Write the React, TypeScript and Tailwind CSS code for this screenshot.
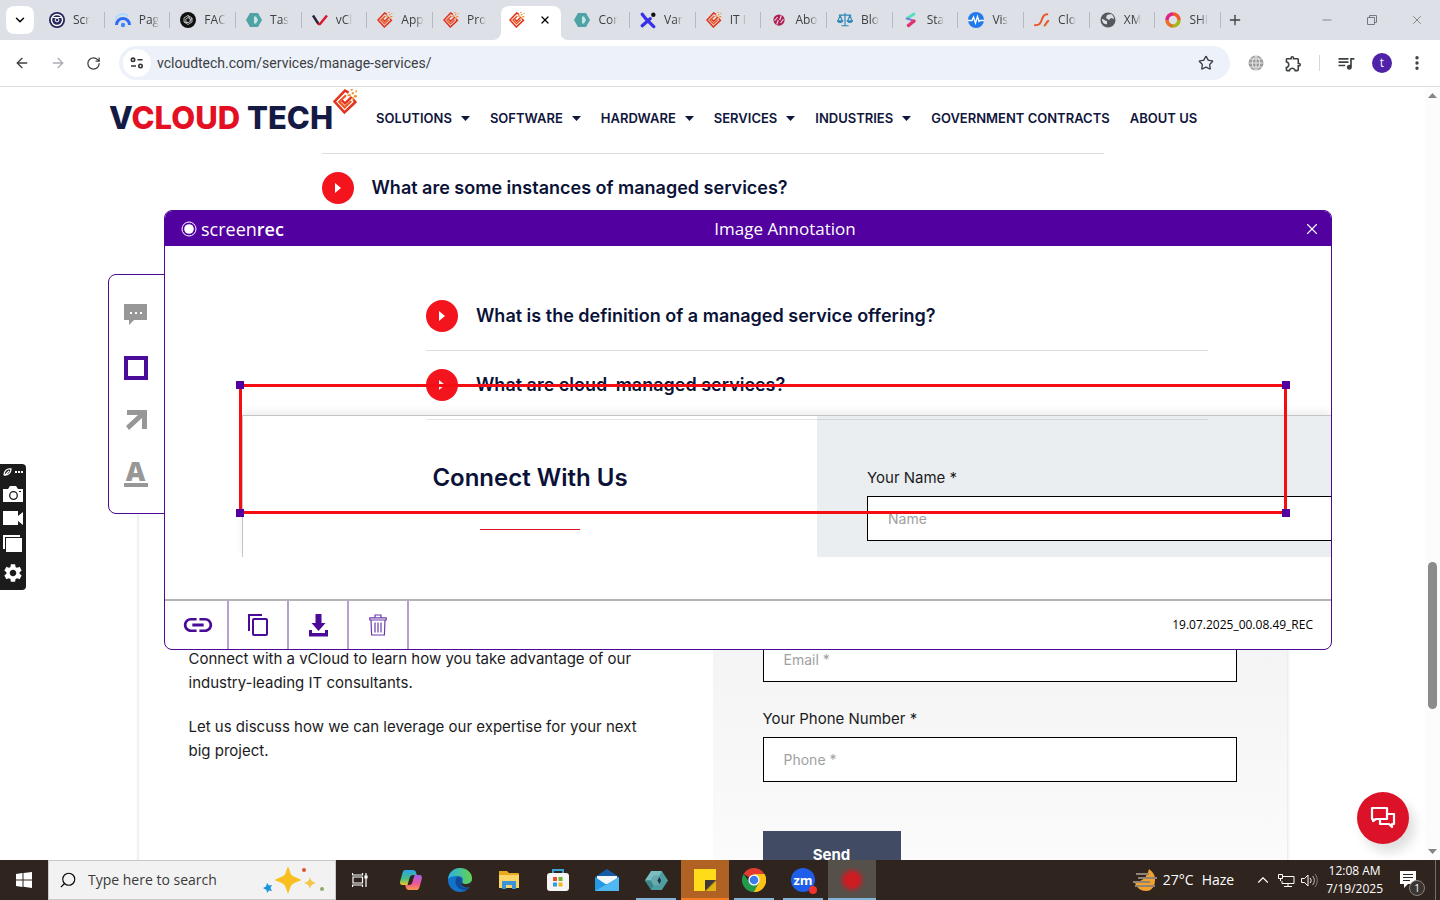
import type { ReactNode } from "react";
import {
  ArrowLeft,
  ArrowRight,
  ChevronDown,
  ChevronUp,
  Minus,
  MoreVertical,
  Plus,
  RotateCw,
  Search,
  Star,
  X,
} from "lucide-react";
import {
  MdLink,
  MdOutlineExtension,
  MdOutlineQueueMusic,
  MdSettings,
} from "react-icons/md";

/* ---------- Site favicons ---------- */

function BrandMark({ size = 16 }: { size?: number }) {
  return (
    <svg width={size} height={size} viewBox="0 0 24 24" fill="none" className="shrink-0" aria-hidden="true">
      <path d="M15 3.5 11.500 1.500 1.500 12 11 22.500 21.500 12.500 19.500 10" stroke="#e2331f" strokeWidth="2.400" />
      <path d="M12.500 6 6 12.200 11.200 17.600 17.500 11.500" stroke="#ee5a24" strokeWidth="2.200" />
      <path d="m8.500 11 3 2.800L18 7.500" stroke="#e2331f" strokeWidth="2.200" />
      <path d="M14 5h3v2h-3zM18 3h2v2h-2zM20 6h3v2h-3zM17 0h2v1.500h-2zM21.500 1.500H23V3h-1.500zM18 8h2v2h-2z" fill="#f08a24" />
    </svg>
  );
}

function HexMark({ size = 16 }: { size?: number }) {
  return (
    <svg width={size} height={size} viewBox="0 0 24 24" aria-hidden="true">
      <path d="M6.500 2h11L24 12l-6.500 10h-11L0 12z" fill="#4d9ea3" />
      <path d="M6.500 2h11L15 7H9L6 12H0z" fill="#7cbdc0" />
      <path d="M0 12h6l3 5-2.500 5z" fill="#3b868c" />
      <path d="M9 7h6l3 5-3 5H9l-3-5z" fill="#6aa9ad" />
      <path d="m15 8 2 4-2 4-2-4z" fill="#173a42" />
    </svg>
  );
}

const favicons: Record<string, ReactNode> = {
  ring: (
    <svg width="16" height="16" viewBox="0 0 16 16" fill="none">
      <circle cx="8" cy="8" r="8" fill="#25265a" />
      <circle cx="8" cy="8" r="5.500" stroke="#fff" strokeWidth="1.400" />
      <path d="M4 5.500h8" stroke="#fff" />
      <circle cx="8" cy="8" r="1.900" stroke="#fff" />
    </svg>
  ),
  gauge: (
    <svg width="16" height="16" viewBox="0 0 16 16" fill="none">
      <path d="M1.500 13a6.500 6.500 0 0 1 13 0" stroke="#2f6df6" strokeWidth="3" />
      <path d="M0 8a8 8 0 0 1 13-4" stroke="#a9dcff" strokeWidth="2" />
      <circle cx="8" cy="13" r="2.200" fill="#3d8bfa" />
    </svg>
  ),
  spiral: (
    <svg width="16" height="16" viewBox="0 0 16 16" fill="none">
      <circle cx="8" cy="8" r="8" fill="#111" />
      <path d="M8 3.500 12 6v4l-4 2.500L4 10V6zM8 5.500 10.200 7v2.500L8 10.700 5.800 9.500V7zM8 3.500l2.200 3.500M4 10l4 .7M12 6 10.200 9.500" stroke="#ddd" strokeWidth=".8" />
    </svg>
  ),
  hex: (
    <svg width="16" height="16" viewBox="0 0 16 16">
      <path d="M4 1h8l4 7-4 7H4L0 8z" fill="#4fa3a5" />
      <path d="M8 4.500h2L12 8l-2 3.500H8z" fill="#c4e8e7" />
    </svg>
  ),
  vee: (
    <svg width="16" height="16" viewBox="0 0 16 16" fill="none">
      <path d="m1 3.500 5.500 8.500" stroke="#2a2038" strokeWidth="2.400" />
      <path d="M6 12h2L15 3.500" stroke="#d9182b" strokeWidth="2.400" />
    </svg>
  ),
  brand: <BrandMark />,
  cross: (
    <svg width="18" height="18" viewBox="0 0 18 18" fill="none">
      <path d="m2.500 2.500 4 5 5 5 4 4M2.500 15.500l4.500-4 4.500-4" stroke="#3730e8" strokeWidth="3.600" strokeLinecap="round" />
      <circle cx="15" cy="3" r="2.500" fill="#111" />
    </svg>
  ),
  ball: (
    <svg width="12" height="12" viewBox="0 0 16 16">
      <circle cx="8" cy="8" r="7.500" fill="#ad1f55" />
      <path d="m2 9 4-5M5 14 7 8M9 8l2-6M10 12l4-5" stroke="#ead4dd" strokeWidth="1.600" />
    </svg>
  ),
  scales: (
    <svg width="18" height="16" viewBox="0 0 18 16" fill="none" stroke="#2f86b7" strokeWidth="1.300">
      <path d="M9 0v14M2 2.500h14M5 14.500h8M3.500 3 1 9M3.500 3 6 9M14.500 3 12 9M14.500 3 17 9" />
      <path d="M.5 9h6c-1 2.300-5 2.300-6 0zM11.500 9h6c-1 2.300-5 2.300-6 0z" fill="#2f86b7" />
    </svg>
  ),
  stripe: (
    <svg width="14" height="16" viewBox="0 0 14 16" fill="none" strokeLinecap="round">
      <path d="M3 6.500 10 2" stroke="#54dfc4" strokeWidth="3" />
      <path d="m3 6.500 6 2" stroke="#8b76d8" strokeWidth="2" />
      <path d="M4.500 13.500 10 9" stroke="#e2336d" strokeWidth="3.500" />
    </svg>
  ),
  pulse: (
    <svg width="16" height="16" viewBox="0 0 16 16" fill="none">
      <circle cx="8" cy="8" r="8" fill="#2279ee" />
      <path d="M0 8.500h4L5.500 5l2 6 2-6.500 1.500 5 1-1H16" stroke="#fff" strokeWidth="1.300" />
    </svg>
  ),
  swoosh: (
    <svg width="18" height="16" viewBox="0 0 18 16" fill="none" strokeLinecap="round">
      <path d="M1 14c6-.5 6-2 8-7s3-5 6-5.500" stroke="#e8592c" strokeWidth="2.300" />
      <path d="M12 14c1.500-1 1.500-3 4-5" stroke="#e8592c" strokeWidth="2.300" />
    </svg>
  ),
  globe: (
    <svg width="16" height="16" viewBox="0 0 16 16">
      <circle cx="8" cy="8" r="7.500" fill="#55595e" />
      <path d="M2 7c2 0 3 2 5 2v3c-3 1-5-2-5-5zM7 3l4-1c2 1 3 3 3 5l-3-1-2 2-3-2z" fill="#dde1e6" />
    </svg>
  ),
  wheel: (
    <svg width="16" height="16" viewBox="0 0 16 16" fill="none" strokeWidth="3.600">
      <path d="M8 2a6 6 0 0 0-6 6" stroke="#e0218a" />
      <path d="M2 8a6 6 0 0 0 6 6" stroke="#e8702a" />
      <path d="M8 14a6 6 0 0 0 6-6" stroke="#a6b81e" />
      <path d="M14 8a6 6 0 0 0-6-6" stroke="#f0572c" />
    </svg>
  ),
};

const tabs = [
  { icon: "ring", title: "Scr" },
  { icon: "gauge", title: "Pag" },
  { icon: "spiral", title: "FAC" },
  { icon: "hex", title: "Tas" },
  { icon: "vee", title: "vCl" },
  { icon: "brand", title: "App" },
  { icon: "brand", title: "Pro" },
  { icon: "brand", title: "", active: true },
  { icon: "hex", title: "Cor" },
  { icon: "cross", title: "Var" },
  { icon: "brand", title: "IT I" },
  { icon: "ball", title: "Abo" },
  { icon: "scales", title: "Blo" },
  { icon: "stripe", title: "Sta" },
  { icon: "pulse", title: "Vis" },
  { icon: "swoosh", title: "Clo" },
  { icon: "globe", title: "XM" },
  { icon: "wheel", title: "SHI" },
];

function TabStrip() {
  return (
    <div className="flex h-10 shrink-0 items-center bg-[#dde1e7] pl-1.5 text-[#3c4043]">
      <button aria-label="Search tabs" className="flex size-7 items-center justify-center rounded-lg bg-white text-black">
        <ChevronDown size={14} strokeWidth={2.5} />
      </button>
      <div className="ml-[5px] flex h-full max-w-[1182px] flex-1 items-center">
        {tabs.map((tab, i) =>
          tab.active ? (
            <div key={i} className="relative flex h-full min-w-0 flex-1 items-end pl-2.5">
              <div className="-ml-2 flex h-[34px] w-[60px] shrink-0 items-center justify-between rounded-t-lg bg-white pr-2.5 pb-1.5 pl-2">
                {favicons[tab.icon]}
                <button aria-label="Close tab" className="text-black">
                  <X size={12} strokeWidth={2.5} />
                </button>
              </div>
              <svg className="absolute bottom-0 -left-1.5" width="8" height="8"><path d="M8 0v8H0a8 8 0 0 0 8-8" fill="#fff" /></svg>
              <svg className="absolute -right-1 bottom-0" width="8" height="8"><path d="M0 0v8h8a8 8 0 0 1-8-8" fill="#fff" /></svg>
            </div>
          ) : (
            <div key={i} className="flex min-w-0 flex-1 items-center pl-2.5">
              <span className="flex w-4 shrink-0 justify-center">{favicons[tab.icon]}</span>
              <span className="ml-2 mask-r-from-60% text-xs whitespace-nowrap">{tab.title}</span>
              {tabs[i + 1]?.active ? null : <span className="ml-auto h-4 w-px bg-[#b4b8bf]" />}
            </div>
          ),
        )}
      </div>
      <button aria-label="New tab" className="ml-1.5"><Plus size={16} /></button>
      <div className="ml-auto flex items-center gap-8 pr-4 text-[#777b80]">
        <button aria-label="Minimize"><Minus size={14} strokeWidth={1.5} /></button>
        <button aria-label="Restore">
          <svg width="12" height="12" viewBox="0 0 12 12" fill="none" stroke="currentColor"><path d="M1.500 3.500h7v7h-7zM3.500 3.500v-2h7v7h-2" /></svg>
        </button>
        <button aria-label="Close"><X size={14} strokeWidth={1.5} /></button>
      </div>
    </div>
  );
}

function AddressBar() {
  return (
    <div className="flex h-[47px] shrink-0 items-center border-b border-[#dcdee1] bg-white px-3.5 text-[#3c4043]">
      <button aria-label="Back"><ArrowLeft size={16} /></button>
      <button aria-label="Forward" className="ml-5 text-[#a9adb2]"><ArrowRight size={16} /></button>
      <button aria-label="Reload" className="ml-5"><RotateCw size={15} /></button>
      <div className="ml-[18px] flex h-[34px] flex-1 items-center rounded-full bg-[#edf1f9] pr-4 pl-1">
        <button aria-label="Site information" className="flex size-7 items-center justify-center rounded-full bg-white">
          <svg width="14" height="12" viewBox="0 0 14 12" fill="none" stroke="#333" strokeWidth="1.600">
            <circle cx="3" cy="2.800" r="1.700" /><path d="M7.500 2.800h5M1 9h5" /><circle cx="10.500" cy="9" r="1.700" />
          </svg>
        </button>
        <input
          aria-label="Address"
          defaultValue="vcloudtech.com/services/manage-services/"
          className="ml-1.5 min-w-0 flex-1 bg-transparent font-[Roboto,sans-serif] text-sm outline-none"
        />
        <button aria-label="Bookmark"><Star size={16} /></button>
      </div>
      <button aria-label="Web extension" className="ml-[18px]">
        <svg width="16" height="16" viewBox="0 0 16 16" fill="none">
          <circle cx="8" cy="8" r="7.500" fill="#9b9b9b" />
          <path d="M.5 8h15M8 .5v15M2 4h12M2 12h12M8 .5c-5 4-5 11 0 15M8 .5c5 4 5 11 0 15" stroke="#eee" strokeWidth=".9" />
        </svg>
      </button>
      <button aria-label="Extensions" className="ml-5"><MdOutlineExtension size={19} /></button>
      <span className="ml-4 h-4 w-px bg-[#d3d6da]" />
      <button aria-label="Media" className="ml-4"><MdOutlineQueueMusic size={20} /></button>
      <button aria-label="Profile" className="ml-4 size-5 rounded-full bg-[#4f22a8] text-xs leading-5 text-white">t</button>
      <button aria-label="Menu" className="ml-4"><MoreVertical size={18} strokeWidth={2.5} /></button>
    </div>
  );
}

/* ---------- vCloud Tech page ---------- */

const navItems = [
  { label: "SOLUTIONS", menu: true },
  { label: "SOFTWARE", menu: true },
  { label: "HARDWARE", menu: true },
  { label: "SERVICES", menu: true },
  { label: "INDUSTRIES", menu: true },
  { label: "GOVERNMENT CONTRACTS" },
  { label: "ABOUT US" },
];

function SiteHeader() {
  return (
    <header className="flex h-[66px] shrink-0 items-start pl-[109px] whitespace-nowrap">
      <a href="#home" className="flex w-[267px] shrink-0 items-start pt-0.5 font-[Inter,sans-serif] text-[31px] leading-8 font-extrabold">
        <span className="mt-[13px] text-[#151a45]">V<span className="text-[#e40f22]">CLOUD</span> TECH</span>
        <BrandMark size={25} />
      </a>
      <nav className="mt-[21px] flex gap-5 font-[Inter,sans-serif] text-[13px] leading-5 font-semibold text-[#10163c]">
        {navItems.map((item) => (
          <a key={item.label} href="#nav" className="flex items-center gap-[9px]">
            {item.label}
            {item.menu && <svg width="9" height="5"><path d="M0 0h9L4.500 5z" fill="#10163c" /></svg>}
          </a>
        ))}
      </nav>
    </header>
  );
}

function Question({ children }: { children: ReactNode }) {
  return (
    <button className="flex h-[68px] w-full items-center gap-[18px] font-[Inter,sans-serif] text-lg font-semibold whitespace-nowrap text-[#0b1238]">
      <span className="flex size-8 items-center justify-center rounded-full bg-[#f3141e]">
        <svg width="8" height="10"><path d="M1 0v10l6-5z" fill="#fff" /></svg>
      </span>
      {children}
    </button>
  );
}

const fieldClass =
  "block h-[45px] w-full border border-black bg-white px-5 text-sm text-black outline-none placeholder:text-[#a1a1a1]";

function SitePage() {
  return (
    <main className="flex min-h-0 flex-1 bg-white">
      <div className="flex min-w-0 flex-1 flex-col overflow-hidden">
        <SiteHeader />
        <section className="mx-auto w-full max-w-[782px] border-t border-[#dcdcdc]">
          <Question>What are some instances of managed services?</Question>
        </section>
        <section className="mx-auto mt-[234px] grid w-full max-w-[1150px] shrink-0 grid-cols-2 border border-[#ededed] font-[Inter,sans-serif] text-[15px] leading-6 text-[#1b1b22] shadow-sm">
          <div className="flex flex-col gap-5 pt-[190px] pr-[70px] pl-[50px]">
            <p>Connect with a vCloud to learn how you take advantage of our industry-leading IT consultants.</p>
            <p>Let us discuss how we can leverage our expertise for your next big project.</p>
          </div>
          <form className="bg-linear-to-b from-[#eceff2] via-[#f5f5f6] to-[#fcfcfc] px-[50px] pt-[180px] pb-5">
            <input aria-label="Email" type="email" placeholder="Email *" className={fieldClass} />
            <label htmlFor="phone" className="mt-[25px] mb-1.5 block leading-6">Your Phone Number *</label>
            <input id="phone" type="tel" placeholder="Phone *" className={fieldClass} />
            <button type="button" className="mt-[49px] h-12 w-[138px] bg-[#414c64] font-bold text-white">Send</button>
          </form>
        </section>
      </div>
      <div className="flex w-[15px] shrink-0 flex-col items-center justify-between bg-[#fcfcfc] py-1.5">
        <svg width="9" height="5"><path d="M0 5h9L4.500 0z" fill="#858585" /></svg>
        <span className="mt-[324px] h-[147px] w-[9px] rounded-full bg-[#8b8b8b]" />
        <svg width="9" height="5"><path d="M0 0h9L4.500 5z" fill="#858585" /></svg>
      </div>
    </main>
  );
}

/* ---------- Screenrec ---------- */

function DrawingTools() {
  return (
    <div className="absolute top-[274px] left-[108px] flex w-[57px] flex-col items-center gap-[29px] rounded-l-lg border border-[#4c0a94] bg-white py-[26px] pr-0.5">
      <button aria-label="Comment">
        <svg width="24" height="26" viewBox="0 0 24 26">
          <path d="M0 3h23v16H10l-5 5v-5H0z" fill="#979797" />
          <path d="M6 11h2v2H6zM11 11h2v2h-2zM16 11h2v2h-2z" fill="#fff" />
        </svg>
      </button>
      <button aria-label="Rectangle" className="size-6 border-4 border-[#4a0b98]" />
      <button aria-label="Arrow">
        <svg width="24" height="22" viewBox="0 0 24 22"><path d="M3 1h20v19h-5V9L5 21l-3-4L14 6H3z" fill="#979797" /></svg>
      </button>
      <button aria-label="Text" className="flex w-6 flex-col items-center border-b-4 border-[#979797] pb-0.5 font-['Open_Sans',sans-serif] text-[27px] leading-[21px] font-extrabold text-[#979797]">
        A
      </button>
    </div>
  );
}

function Screenshot() {
  return (
    <div className="pt-9">
      <div className="relative z-10 ml-[261px] max-w-[782px]">
        <div className="border-b border-[#dcdcdc]"><Question>What is the definition of a managed service offering?</Question></div>
        <div className="border-b border-black/10"><Question>What are cloud-managed services?</Question></div>
      </div>
      <div className="-mt-[5px] ml-[77px] flex h-[142px] overflow-hidden border-t border-l border-[#c4c4c4] font-[Inter,sans-serif] text-[#0b1238] shadow-[0_-4px_8px_#0001]">
        <div className="flex w-[574px] shrink-0 flex-col items-center pt-[46px]">
          <h2 className="text-2xl leading-8 font-semibold">Connect With Us</h2>
          <span className="mt-[35px] h-px w-[100px] bg-[#d9142e]" />
        </div>
        <div className="flex-1 bg-[#ebeef1] pt-[50px] pl-[50px]">
          <label htmlFor="name" className="mb-1.5 block text-[15px] leading-6 text-[#1b1b22]">Your Name *</label>
          <input id="name" placeholder="Name" className={`${fieldClass} border-r-0`} />
        </div>
      </div>
    </div>
  );
}

function Handle({ className }: { className: string }) {
  return <span className={`absolute size-2 bg-[#5200a0] ${className}`} />;
}

const purple = "#4a0b98";

const actions = [
  { label: "Copy link", icon: <MdLink size={34} color={purple} /> },
  {
    label: "Copy",
    icon: (
      <svg width="20" height="22" viewBox="0 0 20 22" fill="none" stroke={purple} strokeWidth="2">
        <path d="M1 17V1h13" /><rect x="5" y="5" width="14" height="16" rx="1" />
      </svg>
    ),
  },
  {
    label: "Download",
    icon: (
      <svg width="19" height="23" viewBox="0 0 19 23" fill={purple}>
        <path d="M6.500 0h6v9h4l-7 8-7-8h4zM0 16h3v3h13v-3h3v6.500H0z" />
      </svg>
    ),
  },
  {
    label: "Delete",
    icon: (
      <svg width="18" height="22" viewBox="0 0 18 22" fill="none" stroke="#6c3bab" strokeWidth="1.200">
        <path d="M6 3.500V1h6v2.500M.8 6V3.800h16.400V6zM2 6l.6 15h12.800L16 6M6 8.500v10M9 8.500v10M12 8.500v10" />
      </svg>
    ),
  },
];

function AnnotationWindow() {
  return (
    <section className="absolute top-[210px] right-[108px] left-[164px] flex h-[440px] flex-col overflow-hidden rounded-lg border border-[#4c0a94] bg-white">
      <div className="flex h-[35px] shrink-0 items-center bg-[#5200a0] pr-2.5 pl-4 text-white">
        <div className="flex w-[110px] items-center gap-1 text-lg leading-6">
          <svg width="16" height="16" viewBox="0 0 16 16" fill="none"><circle cx="8" cy="8" r="7" stroke="#fff" /><circle cx="8" cy="8" r="4.800" fill="#fff" /></svg>
          <span>screen<b className="font-semibold">rec</b></span>
        </div>
        <h1 className="flex-1 pr-6 text-center text-[17px]">Image Annotation</h1>
        <button aria-label="Close window"><X size={18} strokeWidth={1.5} /></button>
      </div>
      <div className="min-h-0 flex-1"><Screenshot /></div>
      {/* Red selection box */}
      <div className="absolute top-[173px] right-[44px] left-[74px] z-20 h-[130px] border-3 border-[#f40d12]">
        <Handle className="-top-1.5 -left-1.5" />
        <Handle className="-top-1.5 -right-1.5" />
        <Handle className="-bottom-1.5 -left-1.5" />
        <Handle className="-right-1.5 -bottom-1.5" />
      </div>
      <div className="flex h-[50px] shrink-0 items-center border-t-2 border-[#b5b1b9] pl-1">
        {actions.map((action) => (
          <button key={action.label} aria-label={action.label} className="flex h-full w-[60px] items-center justify-center border-r-2 border-[#b5a0d0]">
            {action.icon}
          </button>
        ))}
        <span className="ml-auto pr-[18px] text-xs text-black">19.07.2025_00.08.49_REC</span>
      </div>
    </section>
  );
}

function CaptureDock() {
  return (
    <div className="absolute top-[464px] left-0 flex h-[126px] w-[26px] flex-col items-center justify-between rounded-r bg-[#1b1b1b] pt-1 pb-1.5 text-white">
      <svg width="20" height="8" viewBox="0 0 20 8" fill="none">
        <path d="M1 7c0-4 3-7 7-6 0 4-3 6-6 6l4-4" stroke="#fff" strokeWidth="1.300" />
        <path d="M12 3h2v2h-2zM15 3h2v2h-2zM18 3h2v2h-2z" fill="#fff" />
      </svg>
      <button aria-label="Take screenshot">
        <svg width="20" height="16" viewBox="0 0 20 16" fill="none">
          <path d="M0 3h5l2-3h6l2 3h5v13H0z" fill="#fff" /><circle cx="10.500" cy="9.500" r="3.800" stroke="#1b1b1b" strokeWidth="1.300" /><path d="M16 5.500h2" stroke="#1b1b1b" />
        </svg>
      </button>
      <button aria-label="Record video">
        <svg width="20" height="14" viewBox="0 0 20 14" fill="#fff"><path d="M0 0h15v5l5-4v13l-5-4v4H0z" /></svg>
      </button>
      <button aria-label="Gallery">
        <svg width="20" height="18" viewBox="0 0 20 18" fill="#fff"><path d="M0 0h17v2H2v12H0z" /><path d="M3 3h16v14H3z" /></svg>
      </button>
      <button aria-label="Settings"><MdSettings size={22} /></button>
    </div>
  );
}

/* ---------- Windows taskbar ---------- */

const apps = [
  {
    label: "Copilot",
    icon: (
      <svg width="24" height="24" viewBox="0 0 24 24">
        <defs>
          <linearGradient id="cop1" x1="0" y1="0" x2="0" y2="1"><stop stopColor="#2aa4ee" /><stop offset=".6" stopColor="#48c07a" /><stop offset="1" stopColor="#f3c62c" /></linearGradient>
          <linearGradient id="cop2" x1="0" y1="0" x2="0" y2="1"><stop stopColor="#a45cf0" /><stop offset=".6" stopColor="#f2578e" /><stop offset="1" stopColor="#f79a45" /></linearGradient>
        </defs>
        <path d="M6 2h8c3 0 3 3 4 5h-4c-2 0-3 1-3.500 3L8.500 17H4c-3 0-3.500-2-2.500-5L3.500 5C4 3 5 2 6 2z" fill="url(#cop1)" />
        <path d="M18 22h-8c-3 0-3-3-4-5h4c2 0 3-1 3.500-3l2-7H20c3 0 3.500 2 2.500 5l-2 7c-.5 2-1.500 3-2.500 3z" fill="url(#cop2)" />
      </svg>
    ),
  },
  {
    label: "Edge",
    icon: (
      <svg width="24" height="24" viewBox="0 0 24 24">
        <defs><linearGradient id="edge"><stop stopColor="#2bb1e6" /><stop offset="1" stopColor="#65d34b" /></linearGradient></defs>
        <circle cx="12" cy="12" r="12" fill="#1572c9" />
        <path d="M0 11C1 4 6 0 12 0c7 0 12 5 12 10 0 4-3 6-6 6-3 0-4-1-3.500-2.500C16 11 14 8 10 8 5 8 1 9 0 11z" fill="url(#edge)" />
        <path d="M9 9c-4 5 0 13 8 13 2 0 4-1 5-3-3 2-8 1-9-2-1-2 1-3 1-5 0-2-3-4-5-3z" fill="#0f4b9b" />
        <path d="M14.500 13.500c-1 2 1 3 4 2.500 2 0 4-1 5.200-3L24 16l-2 3c-3 1.500-7 0-8.500-2-1-1.500 0-2.500 1-3.500z" fill="#332821" />
      </svg>
    ),
  },
  {
    label: "File Explorer",
    icon: (
      <svg width="22" height="20" viewBox="0 0 22 20">
        <path d="M1 1h8l2 2h9a1 1 0 0 1 1 1v14H1z" fill="#e9a821" /><path d="M1 5h20v13H1z" fill="#fbd567" />
        <path d="M4 11h14v8h-4v-4H8v4H4z" fill="#3d93d8" />
      </svg>
    ),
  },
  {
    label: "Microsoft Store",
    icon: (
      <svg width="24" height="24" viewBox="0 0 24 24">
        <path d="M7 7V2h10v5" fill="none" stroke="#38a3d6" strokeWidth="2" /><rect x="1" y="5" width="22" height="18" rx="3" fill="#f5f5f5" />
        <path d="M7 9h4v4H7z" fill="#e64f2e" /><path d="M12.500 9h4v4h-4z" fill="#70b52c" /><path d="M7 14.500h4v4H7z" fill="#2b9fe0" /><path d="M12.500 14.500h4v4h-4z" fill="#f4b619" />
      </svg>
    ),
  },
  {
    label: "Mail",
    icon: (
      <svg width="24" height="22" viewBox="0 0 24 22">
        <path d="m0 8 12-8 12 8v14H0z" fill="#165ba8" /><path d="M2 7h20v8H2z" fill="#f4f8fb" />
        <path d="m0 8 12 8L24 8v14H0z" fill="#2598e3" /><path d="m24 8-24 14h24z" fill="#50b9f2" />
      </svg>
    ),
  },
  { label: "Monitor", icon: <HexMark size={23} />, line: "after:w-10 after:bg-[#82b4d8]" },
  {
    label: "Sticky Notes",
    icon: (
      <svg width="22" height="22" viewBox="0 0 22 22"><path d="M0 0h22v11L11 22H0z" fill="#ffdc19" /><path d="M11 11h11L11 22z" fill="#3f3a33" /><path d="M22 12v10H12z" fill="#e0b411" /></svg>
    ),
    line: "bg-[#b06224] after:w-full after:bg-[#f47b20]",
  },
  {
    label: "Chrome",
    icon: (
      <svg width="24" height="24" viewBox="0 0 24 24">
        <path d="M12 12 1.600 6a12 12 0 0 1 20.800 0z" fill="#e33b2e" /><path d="M12 12 22.400 6A12 12 0 0 1 12 24z" fill="#fbc116" />
        <path d="M1.600 6A12 12 0 0 0 12 24l5-9H8z" fill="#229a4a" /><path d="M12 6h10.400A12 12 0 0 1 12 24l5-9z" fill="#fbc116" />
        <circle cx="12" cy="12" r="5.600" fill="#fff" /><circle cx="12" cy="12" r="4.300" fill="#3b7ded" />
      </svg>
    ),
    line: "after:w-10 after:bg-[#82b4d8]",
  },
  {
    label: "Zoom",
    icon: (
      <span className="relative flex size-6 items-center justify-center rounded-full bg-[#1f5ee8] text-[13px] leading-none font-bold text-white">
        zm
        <i className="absolute -right-0.5 -bottom-0.5 size-2 rounded-full bg-[#f2322e]" />
      </span>
    ),
    line: "after:w-10 after:bg-[#82b4d8]",
  },
  {
    label: "Recorder",
    icon: <span className="size-5 rounded-full bg-[#cf1b22] blur-[2px]" />,
    line: "bg-[#56504a] after:w-full after:bg-[#82b4d8]",
  },
];

function Taskbar() {
  return (
    <footer className="relative flex h-10 shrink-0 items-center bg-[#30251e] text-white">
      <button aria-label="Start" className="flex h-full w-12 items-center justify-center">
        <svg width="16" height="16" viewBox="0 0 16 16" fill="#fff"><path d="m0 2 6.500-1v6.500H0zM7.500.9 16 0v7.500H7.500zM0 8.500h6.500V15L0 14zM7.500 8.500H16V16l-8.500-1.200z" /></svg>
      </button>
      <label className="flex h-full w-72 items-center border border-[#c9c9c9] bg-[#f2f2f2] pr-2 pl-2.5 text-black">
        <Search size={18} strokeWidth={1.5} className="-scale-x-100" />
        <input aria-label="Search" placeholder="Type here to search" className="ml-[11px] min-w-0 flex-1 text-sm outline-none placeholder:text-[#3a3a3a]" />
        <svg width="64" height="28" viewBox="0 0 64 28">
          <path d="M25 2c2 8 3 9 12 12-9 3-10 4-12 12-2-8-3-9-12-12 9-3 10-4 12-12z" fill="#f9bf1f" stroke="#f9bf1f" strokeWidth="1.500" strokeLinejoin="round" />
          <path d="M47 11c1 4 2 4.500 6 6-4 1.500-5 2-6 6-1-4-2-4.500-6-6 4-1.500 5-2 6-6z" fill="#f6c646" />
          <path d="m4 17 2 2.500 3-.5-1.500 3L9 25l-3-.5L4 27l-.5-3L0 22l3-1.500z" fill="#1e93dd" />
          <circle cx="41" cy="4" r="2" fill="#dc5430" /><circle cx="59" cy="23" r="2" fill="#91a868" />
        </svg>
      </label>
      <button aria-label="Task view" className="mr-[3px] flex h-full w-12 items-center justify-center">
        <svg width="16" height="16" viewBox="0 0 16 16" fill="none" stroke="#fff" strokeWidth="1.200"><path d="M.5 1v2h10V1M.5 15v-2h10v2M1 5h9.500v6H1zM14 1v14" /><path d="M13 4h2v2h-2z" fill="#fff" /></svg>
      </button>
      <div className="flex h-full gap-px">
        {apps.map((app) => (
          <button
            key={app.label}
            aria-label={app.label}
            className={`relative flex h-full w-12 items-center justify-center after:absolute after:bottom-0 after:h-0.5 ${app.line ?? ""}`}
          >
            {app.icon}
          </button>
        ))}
      </div>
      <div className="ml-auto flex h-full items-center whitespace-nowrap">
        <svg width="25" height="24" viewBox="0 0 25 24" fill="none">
          <path d="M17 1c-2 8-6 12-14 14 2 5 6 8 11 8 6 0 9-5 9-11 0-5-2-8-6-11z" fill="#f0a22c" />
          <path d="M4 6h13M6 10h19M1 14h17M3 18h20" stroke="#91837a" strokeWidth="1.800" />
        </svg>
        <span className="ml-1.5 text-sm">27°C</span>
        <span className="ml-2 text-sm">Haze</span>
        <ChevronUp size={18} strokeWidth={1.5} className="ml-5" />
        <svg className="ml-1.5" width="17" height="15" viewBox="0 0 17 15" fill="none" stroke="#fff"><path d="M5 3.500h11v7H4V8M10 10.500v3M6 13.500h8" /><path d="M.5 1.500h4v4h-4zM2.500 5.500V8" /></svg>
        <svg className="ml-1.5" width="17" height="15" viewBox="0 0 17 15" fill="none" stroke="#fff"><path d="M.5 5.500h3L7 2v11L3.500 9.500h-3zM9 5c1.500 1.500 1.500 3.500 0 5" /><path d="M11.500 3c2.500 2.500 2.500 6.500 0 9" opacity=".7" /><path d="M14 1c3 4 3 9 0 13" opacity=".4" /></svg>
        <div className="ml-2 text-center text-xs leading-[18px]">
          <div>12:08 AM</div>
          <div>7/19/2025</div>
        </div>
        <button aria-label="Notifications" className="relative ml-4">
          <svg width="24" height="24" viewBox="0 0 24 24" fill="none"><path d="M1 3h16v13H9l-4 4v-4H1z" fill="#fff" /><path d="M4 6.500h10M4 9.500h10M4 12.500h7" stroke="#30251e" /></svg>
          <span className="absolute -right-0.5 -bottom-1 size-4 rounded-full border border-[#8a837d] bg-[#3a3532] text-[10px] leading-[14px]">1</span>
        </button>
        <span className="mr-1 ml-3 h-full w-px bg-[#77706a]" />
      </div>
    </footer>
  );
}

export default function App() {
  return (
    <div className="relative flex h-screen flex-col overflow-hidden bg-white font-['Open_Sans','Noto_Sans',sans-serif]">
      <TabStrip />
      <AddressBar />
      <SitePage />
      <DrawingTools />
      <AnnotationWindow />
      <CaptureDock />
      <button aria-label="Chat" className="absolute right-[31px] bottom-14 flex size-[52px] items-center justify-center rounded-full bg-[#dc1228] shadow-[6px_8px_12px_#0002]">
        <svg width="26" height="24" viewBox="0 0 26 24" fill="none" stroke="#fff" strokeWidth="2.200" strokeLinejoin="round">
          <path d="M9 13H6l-3 2v-2H2V2h15v5" /><path d="M17 7v6H9M10 13v5h9l3 3v-3h2V8h-7" />
        </svg>
      </button>
      <Taskbar />
    </div>
  );
}
